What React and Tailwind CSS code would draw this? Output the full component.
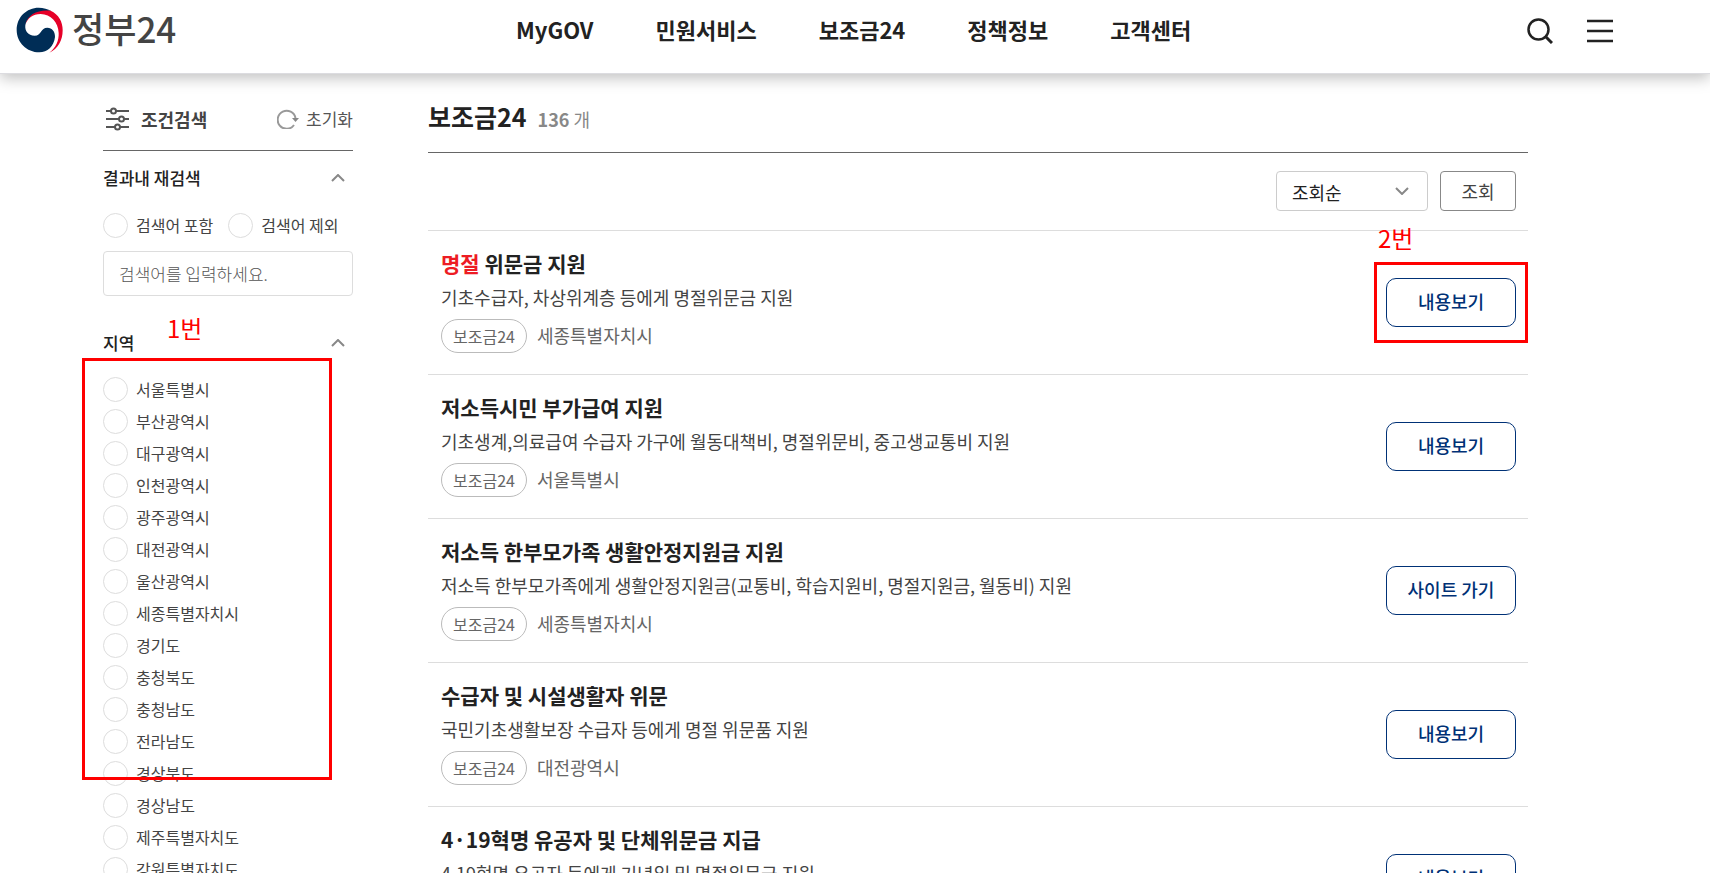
import { useState } from "react";

const navItems = ["MyGOV", "민원서비스", "보조금24", "정책정보", "고객센터"];

const regions = [
  "서울특별시",
  "부산광역시",
  "대구광역시",
  "인천광역시",
  "광주광역시",
  "대전광역시",
  "울산광역시",
  "세종특별자치시",
  "경기도",
  "충청북도",
  "충청남도",
  "전라남도",
  "경상북도",
  "경상남도",
  "제주특별자치도",
  "강원특별자치도",
];

const services = [
  {
    id: 1,
    highlight: "명절",
    title: " 위문금 지원",
    description: "기초수급자, 차상위계층 등에게 명절위문금 지원",
    region: "세종특별자치시",
    action: "내용보기",
    note: "2번",
  },
  {
    id: 2,
    title: "저소득시민 부가급여 지원",
    description: "기초생계,의료급여 수급자 가구에 월동대책비, 명절위문비, 중고생교통비 지원",
    region: "서울특별시",
    action: "내용보기",
  },
  {
    id: 3,
    title: "저소득 한부모가족 생활안정지원금 지원",
    description: "저소득 한부모가족에게 생활안정지원금(교통비, 학습지원비, 명절지원금, 월동비) 지원",
    region: "세종특별자치시",
    action: "사이트 가기",
  },
  {
    id: 4,
    title: "수급자 및 시설생활자 위문",
    description: "국민기초생활보장 수급자 등에게 명절 위문품 지원",
    region: "대전광역시",
    action: "내용보기",
  },
  {
    id: 5,
    title: "4·19혁명 유공자 및 단체위문금 지급",
    description: "4.19혁명 유공자 등에게 기념일 및 명절위문금 지원",
    region: "서울특별시",
    action: "내용보기",
  },
];

const Chevron = ({ className }) => (
  <svg className={className} width="14" height="8" viewBox="0 0 14 8" fill="none" stroke="#888" strokeWidth="2">
    <path d="M1 7l6-6 6 6" />
  </svg>
);

const Logo = () => (
  <a href="#" className="flex items-start gap-2">
    <svg width="48" height="46" viewBox="20 22 144 138">
      <path
        fill="#e60028"
        d="M48 76C52 40 92 24 124 33C148 44 160 66 160 92C160 122 146 148 120 159C140 144 149 122 148 100C147 68 124 43 94 43C70 43 54 56 48 76Z"
      />
      <path
        fill="#002d56"
        d="M22 91C22 52 52 24 88 24C102 24 116 28 126 34C92 28 54 42 48 76C46 94 56 108 76 108C96 108 94 84 114 84C128 84 138 96 137 112C134 140 114 158 90 158C52 158 22 128 22 91Z"
      />
    </svg>
    <span className="text-[35px] leading-[42px] font-medium text-[#444]">정부24</span>
  </a>
);

const Header = () => (
  <header className="relative z-10 flex h-[74px] items-start border-b border-[#dcdce0] bg-white pt-[7px] pr-[97px] pl-4 shadow-[0_4px_14px_rgba(0,0,0,0.25)]">
    <div className="w-[500px]">
      <Logo />
    </div>
    <nav className="flex gap-[62px] pt-1 text-[22px] leading-9 font-bold text-[#222]">
      {navItems.map((item) => (
        <a key={item} href="#">
          {item}
        </a>
      ))}
    </nav>
    <div className="ml-auto flex gap-[34px] pt-[11px]">
      <button type="button" aria-label="검색">
        <svg width="26" height="26" viewBox="0 0 26 26" fill="none" stroke="#222" strokeWidth="2.5">
          <circle cx="11.5" cy="11.5" r="10" />
          <path d="M18 18l7 7" strokeWidth="3" />
        </svg>
      </button>
      <button type="button" aria-label="전체메뉴">
        <svg width="26" height="26" viewBox="0 0 26 26" stroke="#222" strokeWidth="2.5">
          <path d="M0 3h26M0 13h26M0 23h26" />
        </svg>
      </button>
    </div>
  </header>
);

const Radio = ({ name, label, checked, onChange }) => (
  <label className="flex h-8 items-center gap-2 text-base whitespace-nowrap text-[#444]">
    <input
      type="radio"
      name={name}
      checked={checked}
      onChange={onChange}
      className="size-[25px] appearance-none rounded-full border border-[#ddd] bg-white checked:border-[7px] checked:border-[#003176]"
    />
    {label}
  </label>
);

const SectionTitle = ({ children }) => (
  <button
    type="button"
    className="flex h-8 w-full items-center justify-between pr-2 text-[17px] font-medium text-[#222]"
  >
    {children}
    <Chevron />
  </button>
);

const Sidebar = () => {
  const [mode, setMode] = useState("");
  const [region, setRegion] = useState("");
  const [keyword, setKeyword] = useState("");

  const handleReset = () => {
    setMode("");
    setRegion("");
    setKeyword("");
  };

  return (
    <aside className="w-[250px] shrink-0">
      <div className="flex h-[47px] items-start justify-between border-b border-[#666]">
        <h2 className="flex items-center gap-3 pl-[3px] text-lg leading-[30px] font-bold text-[#444]">
          <svg width="23" height="24" viewBox="0 0 23 24" fill="none" stroke="#555" strokeWidth="2">
            <path d="M0 4h5M10 4h13M0 12h13M18 12h5M0 20h9M14 20h9" />
            <circle cx="7.5" cy="4" r="2.5" />
            <circle cx="15.5" cy="12" r="2.5" />
            <circle cx="11.5" cy="20" r="2.5" />
          </svg>
          조건검색
        </h2>
        <button
          type="button"
          onClick={handleReset}
          className="flex items-center gap-[7px] text-[17px] leading-[30px] text-[#555]"
        >
          <svg width="22" height="20" viewBox="0 0 22 20" fill="none" stroke="#999" strokeWidth="2">
            <path d="M17 16a9 9 0 1 1 1.500-7" />
            <path d="M15 9h7l-3.500 4z" fill="#888" stroke="none" />
          </svg>
          초기화
        </button>
      </div>

      {/* 결과내 재검색 */}
      <section className="pt-[11px]">
        <SectionTitle>결과내 재검색</SectionTitle>
        <div className="flex gap-[15px] pt-[15px]">
          <Radio
            name="mode"
            label="검색어 포함"
            checked={mode === "include"}
            onChange={() => setMode("include")}
          />
          <Radio
            name="mode"
            label="검색어 제외"
            checked={mode === "exclude"}
            onChange={() => setMode("exclude")}
          />
        </div>
        <input
          type="text"
          aria-label="검색어"
          placeholder="검색어를 입력하세요."
          value={keyword}
          onChange={(e) => setKeyword(e.target.value)}
          className="mt-[10px] h-[45px] w-full rounded border border-[#ddd] px-[15px] text-[17px] font-light placeholder:text-[#555]"
        />
      </section>

      {/* 지역 */}
      <section className="relative pt-[31px]">
        <SectionTitle>지역</SectionTitle>
        <div className="pt-3.5">
          {regions.map((item) => (
            <Radio
              key={item}
              name="region"
              label={item}
              checked={region === item}
              onChange={() => setRegion(item)}
            />
          ))}
        </div>
        <span className="absolute top-4 left-16 text-2xl text-[#f00]">1번</span>
        <div className="pointer-events-none absolute top-[62px] -left-[21px] h-[422px] w-[250px] border-3 border-[#f00]" />
      </section>
    </aside>
  );
};

const ServiceRow = ({ service }) => (
  <li className="flex items-center justify-between border-t border-[#ddd] pr-3 pl-[13px]">
    <div className="pt-4 pb-[21px]">
      <h3 className="text-[21px] leading-8 font-bold text-[#222]">
        {service.highlight && <span className="text-[#ed1c24]">{service.highlight}</span>}
        {service.title}
      </h3>
      <p className="mt-0.5 text-lg leading-8 text-[#444]">{service.description}</p>
      <div className="mt-1.5 flex items-start gap-2.5 text-[#666]">
        <span className="flex h-[34px] items-center rounded-[17px] border border-[#bbb] px-[11px] text-base">
          보조금24
        </span>
        <span className="text-lg leading-8">{service.region}</span>
      </div>
    </div>
    <div className="relative">
      <button
        type="button"
        className="h-[49px] w-[130px] rounded-[10px] border border-[#003176] pb-1 text-lg font-medium text-[#003176]"
      >
        {service.action}
      </button>
      {service.note && (
        <>
          <span className="absolute -top-14 -left-2 text-2xl text-[#f00]">
            {service.note}
          </span>
          <div className="pointer-events-none absolute -inset-x-3 -inset-y-4 border-3 border-[#f00]" />
        </>
      )}
    </div>
  </li>
);

const Results = () => (
  <main className="min-w-0 flex-1">
    <div className="flex h-[49px] items-start gap-[11px] border-b border-[#666]">
      <h1 className="text-[25px] leading-6 font-bold text-[#222]">보조금24</h1>
      <p className="text-lg leading-[30px] text-[#888]">
        <strong className="font-bold">136</strong> 개
      </p>
    </div>
    <div className="flex items-center justify-end gap-3 px-3 pt-[18px] pb-[19px]">
      <div className="relative">
        <select
          aria-label="정렬"
          className="h-10 w-[152px] appearance-none rounded border border-[#ccc] bg-white px-[15px] pt-0.5 text-lg text-[#222]"
        >
          <option>조회순</option>
          <option>최신순</option>
        </select>
        <Chevron className="pointer-events-none absolute top-4 right-[19px] rotate-180" />
      </div>
      <button type="button" className="h-10 w-[76px] rounded border border-[#888] text-lg text-[#444]">
        조회
      </button>
    </div>
    <ul>
      {services.map((service) => (
        <ServiceRow key={service.id} service={service} />
      ))}
    </ul>
  </main>
);

const App = () => (
  <div className="h-screen overflow-hidden bg-white font-['Noto_Sans_CJK_KR',sans-serif]">
    <Header />
    <div className="flex gap-[75px] pt-[30px] pr-[182px] pl-[103px]">
      <Sidebar />
      <Results />
    </div>
  </div>
);

export default App;
